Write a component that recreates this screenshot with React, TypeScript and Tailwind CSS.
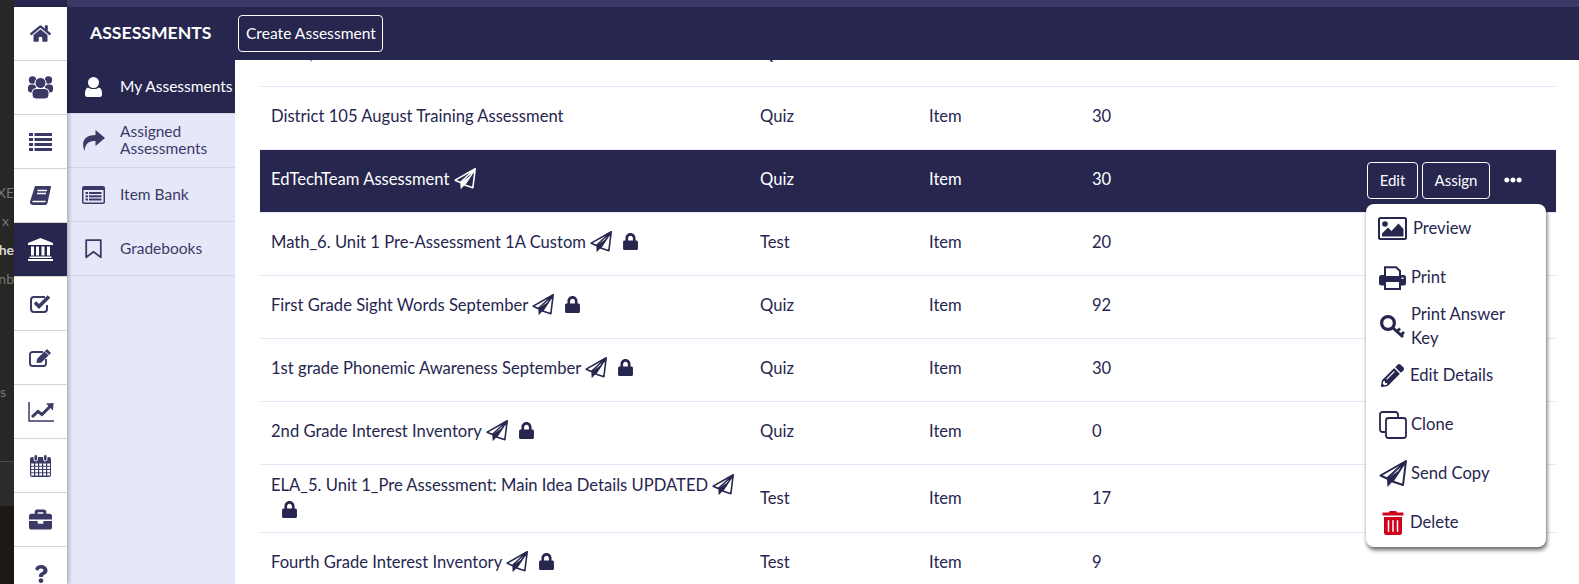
import { ReactNode } from 'react';
import { FaBriefcase, FaEllipsisH, FaHome, FaLock, FaPencilAlt, FaQuestion, FaTrashAlt } from 'react-icons/fa';

function UsersIcon() {
  return (
    <svg width="25" height="23" viewBox="0 0 25 23" fill="currentColor">
      <circle cx="4.5" cy="4" r="3.7" />
      <circle cx="20.5" cy="4" r="3.7" />
      <rect x="0" y="8.5" width="8" height="8" rx="3" />
      <rect x="17" y="8.5" width="8" height="8" rx="3" />
      <circle cx="12.5" cy="7" r="5.5" stroke="#fff" strokeWidth="1" />
      <rect x="4" y="12.5" width="17" height="10.5" rx="4" stroke="#fff" strokeWidth="1" />
    </svg>
  );
}

function ListIcon() {
  return (
    <svg width="23" height="18" viewBox="0 0 23 18" fill="currentColor">
      {[0, 5, 10, 15].map((y) => (
        <g key={y}>
          <rect x="0" y={y} width="4" height="3" />
          <rect x="5.5" y={y} width="17.5" height="3" />
        </g>
      ))}
    </svg>
  );
}

function BookIcon() {
  return (
    <svg width="21" height="19" viewBox="0 0 21 19" fill="currentColor">
      <path d="M5 0H20a1 1 0 0 1 1 1L17.5 17a2.5 2.5 0 0 1-2.5 2H3a3 3 0 0 1-3-3.2Z" />
      <path d="M7.5 4.5H17M7 7.5H16M2.5 15.5H15.5" stroke="#fff" strokeWidth="1.3" />
    </svg>
  );
}

function BankIcon() {
  return (
    <svg width="25" height="23" viewBox="0 0 25 23" fill="currentColor">
      <path d="M12.5 0L25 5V7H0V5Z" />
      {[3, 8, 13.5, 19].map((x) => (
        <rect key={x} x={x} y="8.5" width="3" height="9" />
      ))}
      <rect x="1.5" y="18.5" width="22" height="1.5" />
      <rect x="0" y="21" width="25" height="2" />
    </svg>
  );
}

function CheckIcon() {
  return (
    <svg width="21" height="18" viewBox="0 0 21 18" fill="none" stroke="currentColor">
      <path d="M17 10v4a3 3 0 0 1-3 3H4a3 3 0 0 1-3-3V5a3 3 0 0 1 3-3h11" strokeWidth="2" />
      <path d="M5 7.5l4 4L19 1.5" strokeWidth="3.6" />
    </svg>
  );
}

function EditIcon() {
  return (
    <svg width="23" height="18" viewBox="0 0 23 18" fill="currentColor">
      <path d="M17 10v4.5a2.5 2.5 0 0 1-2.5 2.5h-11A2.5 2.5 0 0 1 1 14.5v-9A2.5 2.5 0 0 1 3.5 3H14" fill="none" stroke="currentColor" strokeWidth="1.9" />
      <path d="M7.5 14l.7-4.2L18 0l4 4-9.8 9.8Z" />
      <path d="M16.3 2.7l3.5 3.5" stroke="#fff" strokeWidth="0.9" />
    </svg>
  );
}

function ChartIcon() {
  return (
    <svg width="26" height="20" viewBox="0 0 26 20" fill="none" stroke="currentColor">
      <path d="M1 0V19H26" strokeWidth="1.5" />
      <path d="M4 15l6-5.5 4 3L22 4.5" strokeWidth="3" />
      <path d="M18 1.5L25.5 1 25 8.5Z" fill="currentColor" stroke="none" />
    </svg>
  );
}

function CalendarIcon() {
  const cols = [2, 6, 10, 14, 18];
  const lines = [9.5, 12.75, 16, 19.25];
  return (
    <svg width="21" height="23" viewBox="0 0 21 23" fill="currentColor">
      <rect x="0" y="3" width="21" height="20" rx="2" />
      {cols.map((x) =>
        lines.map((y) => <rect key={`${x}-${y}`} x={x - 0.8} y={y} width="2.8" height="2.3" fill="#fff" />),
      )}
      <rect x="4" y="0.5" width="3.5" height="6.5" rx="1.7" stroke="#fff" strokeWidth="1" />
      <rect x="13.5" y="0.5" width="3.5" height="6.5" rx="1.7" stroke="#fff" strokeWidth="1" />
    </svg>
  );
}

function UserIcon() {
  return (
    <svg width="17" height="20" viewBox="0 0 17 20" fill="currentColor">
      <circle cx="8.5" cy="5.5" r="5.5" />
      <path d="M3 10.5c3 2 8 2 11 0 2 .5 3 3 3 6v1a2.5 2.5 0 0 1-2.5 2.5h-12A2.5 2.5 0 0 1 0 17.5v-1c0-3 1-5.5 3-6Z" />
    </svg>
  );
}

function ShareIcon() {
  return (
    <svg width="23" height="21" viewBox="0 0 23 21" fill="currentColor">
      <path d="M13.5 0L23 8l-9.5 8v-5C7 11 3.5 13 2.5 21-1 12 2 5 13.5 5Z" />
    </svg>
  );
}

function ListAltIcon() {
  return (
    <svg width="23" height="18" viewBox="0 0 23 18" fill="currentColor">
      <rect x="0" y="0" width="23" height="18" rx="2" />
      <rect x="1.5" y="4" width="20" height="12.5" fill="#e6e8fa" />
      {[6, 9.3, 12.5].map((y) => (
        <g key={y}>
          <rect x="3.5" y={y} width="2.5" height="2" />
          <rect x="7" y={y} width="12.5" height="2" />
        </g>
      ))}
    </svg>
  );
}

function BookmarkIcon() {
  return (
    <svg width="17" height="20" viewBox="0 0 17 20" fill="none" stroke="currentColor" strokeWidth="1.8">
      <path d="M1.2 1.2H15.8V18.3L8.5 12.8 1.2 18.3Z" strokeLinejoin="round" />
    </svg>
  );
}

function PictureIcon() {
  return (
    <svg width="29" height="23" viewBox="0 0 29 23" fill="currentColor">
      <rect x="1" y="1" width="27" height="21" rx="1.5" fill="none" stroke="currentColor" strokeWidth="2" />
      <circle cx="7" cy="7" r="2.8" />
      <path d="M4 19.5v-3l6-6 3.5 3.5 7-7.5 5 5.5v7.5Z" />
    </svg>
  );
}

function PrintIcon() {
  return (
    <svg width="27" height="24" viewBox="0 0 27 24" fill="currentColor">
      <rect x="0" y="9" width="27" height="10.5" rx="2.5" />
      <path d="M6 10V1.2H17L21 5V10" fill="#fff" stroke="currentColor" strokeWidth="2" />
      <rect x="6" y="15" width="15" height="8" fill="#fff" stroke="currentColor" strokeWidth="2" />
      <rect x="22.5" y="11.5" width="2" height="1.5" fill="#fff" />
    </svg>
  );
}

function KeyIcon() {
  return (
    <svg width="25" height="24" viewBox="0 0 25 24" fill="none" stroke="currentColor">
      <circle cx="8" cy="8" r="6.4" strokeWidth="3.2" />
      <path d="M12.5 12.5L23 22" strokeWidth="3" />
      <path d="M17 16.5l3-3M21 20l3-3" strokeWidth="2.8" />
    </svg>
  );
}

function CloneIcon() {
  return (
    <svg width="28" height="28" viewBox="0 0 28 28" fill="none" stroke="currentColor" strokeWidth="1.8">
      <path d="M6 21H3.5A2.5 2.5 0 0 1 1 18.5V3.5A2.5 2.5 0 0 1 3.5 1H16.5A2.5 2.5 0 0 1 19 3.5V6" />
      <rect x="7" y="7" width="20" height="20" rx="2.5" />
    </svg>
  );
}

function PlaneIcon({ size = 22 }: { size?: number }) {
  return (
    <svg width={size} height={size} viewBox="0 0 28 28" fill="none" stroke="currentColor" strokeWidth="2" strokeLinejoin="round" className="inline-block align-[-5px]">
      <path d="M27 1L1.5 15.5 8 18.5 27 1 24 25 13.5 21.5 27 1" />
      <path d="M8 18.5L8.5 27 13.5 21.5 21 10Z" fill="currentColor" stroke="none" />
    </svg>
  );
}

const railItems = [
  { icon: <FaHome size={21} /> },
  { icon: <UsersIcon /> },
  { icon: <ListIcon /> },
  { icon: <BookIcon /> },
  { icon: <BankIcon />, active: true },
  { icon: <CheckIcon /> },
  { icon: <EditIcon /> },
  { icon: <ChartIcon /> },
  { icon: <CalendarIcon /> },
  { icon: <FaBriefcase size={23} /> },
  { icon: <FaQuestion size={18} /> },
];

const rows = [
  { name: 'District 105 August Training Assessment', type: 'Quiz', count: '30', plain: true },
  { name: 'EdTechTeam Assessment', type: 'Quiz', count: '30', selected: true },
  { name: 'Math_6. Unit 1 Pre-Assessment 1A Custom', type: 'Test', count: '20' },
  { name: 'First Grade Sight Words September', type: 'Quiz', count: '92' },
  { name: '1st grade Phonemic Awareness September', type: 'Quiz', count: '30' },
  { name: '2nd Grade Interest Inventory', type: 'Quiz', count: '0' },
  { name: 'ELA_5. Unit 1_Pre Assessment: Main Idea Details UPDATED', type: 'Test', count: '17', tall: true },
  { name: 'Fourth Grade Interest Inventory', type: 'Test', count: '9' },
];

function NavItem({ icon, active, children }: { icon: ReactNode; active?: boolean; children: ReactNode }) {
  return (
    <div
      className={`flex h-[54px] items-center border-b border-[#d5d6e4] ${
        active ? 'bg-[#26264f] text-white' : 'text-[#3b3a66]'
      }`}
    >
      <div className="flex w-[53px] shrink-0 justify-center pr-px">{icon}</div>
      <div className="text-[15.5px] leading-[17px]">{children}</div>
    </div>
  );
}

function MenuItem({ icon, label, gap = 'ml-[4px]' }: { icon: ReactNode; label: ReactNode; gap?: string }) {
  return (
    <div className="flex h-[49px] items-center pl-3">
      <div className="flex w-[29px] shrink-0 justify-center">{icon}</div>
      <div className={`${gap} pb-[2px] leading-6`}>{label}</div>
    </div>
  );
}

function ActionMenu() {
  return (
    <div className="absolute right-[10px] top-[54px] z-10 w-[180px] rounded-lg bg-white text-[#26264f] shadow-[1px_3px_4px_rgba(0,0,0,0.6)]">
      <MenuItem icon={<PictureIcon />} label="Preview" gap="ml-[6px]" />
      <MenuItem icon={<PrintIcon />} label="Print" />
      <MenuItem icon={<KeyIcon />} label={<span className="block w-[110px]">Print Answer Key</span>} />
      <MenuItem icon={<FaPencilAlt size={23} />} label="Edit Details" gap="ml-[3px]" />
      <MenuItem icon={<CloneIcon />} label="Clone" />
      <MenuItem icon={<PlaneIcon size={28} />} label="Send Copy" />
      <MenuItem icon={<FaTrashAlt size={24} className="text-[#d0021b]" />} label="Delete" gap="ml-[3px]" />
    </div>
  );
}

function Row({ row }: { row: (typeof rows)[number] }) {
  return (
    <div
      className={`relative flex items-center border-b border-[#e6e8fa] pl-[11px] ${
        row.selected ? 'h-[63px] bg-[#26264f] pb-[3px] text-white' : row.tall ? 'h-[68px] pb-[1px]' : 'h-[63px] pb-[3px]'
      }`}
    >
      <div className="w-[489px] shrink-0 pr-6">
        {row.name}
        {!row.plain && (
          <>
            {' '}
            <PlaneIcon />
          </>
        )}
        {!row.plain && !row.selected && <FaLock size={17} className="ml-[10px] inline-block align-[-2px]" />}
      </div>
      <div className="w-[169px] shrink-0">{row.type}</div>
      <div className="w-[163px] shrink-0">Item</div>
      <div>{row.count}</div>
      {row.selected && (
        <>
          <div className="absolute right-[66px] top-[12px] flex gap-1 text-[15px]">
            <button className="h-[37px] w-[51px] rounded border border-white">Edit</button>
            <button className="h-[37px] w-[68px] rounded border border-white">Assign</button>
          </div>
          <FaEllipsisH size={18} className="absolute right-[34px] top-[21px]" />
          <ActionMenu />
        </>
      )}
    </div>
  );
}

export default function App() {
  return (
    <div className="flex h-[584px] w-[1579px] overflow-hidden bg-white font-['Lato',sans-serif] text-[16.6px] text-[#26264f]">
      {/* page behind the overlay, only a sliver of it shows */}
      <div className="relative flex w-[14px] shrink-0 flex-col overflow-hidden bg-[#272725] text-[14px] text-[#77777a]">
        <div className="absolute right-0 top-[182px] whitespace-nowrap">XE</div>
        <div className="absolute right-[5px] top-[210px]">x</div>
        <div className="absolute right-0 top-[239px] font-bold text-[#d8d8d8]">he</div>
        <div className="absolute right-0 top-[268px]">nb</div>
        <div className="absolute right-[8px] top-[381px]">s</div>
        <div className="mt-[461px] h-[45px] border-t border-[#4a4a4a] bg-[#2c2c2c]" />
        <div className="flex-1 bg-[#1d1715]" />
      </div>
      <div className="flex min-w-0 flex-1 flex-col">
        <div className="flex h-[7px] shrink-0 bg-[#3b3a66]">
          <div className="w-[53px] bg-[#26264f]" />
        </div>
        <div className="flex min-h-0 flex-1">
          <div className="z-10 w-[53px] shrink-0 bg-white text-[#3b3a66] shadow-[2px_0_4px_rgba(0,0,0,0.25)]">
            {railItems.map((item, i) => (
              <div
                key={i}
                className={`flex h-[54px] items-center justify-center border-b border-[#d5d5d5] ${
                  item.active ? 'bg-[#26264f] text-white' : ''
                }`}
              >
                {item.icon}
              </div>
            ))}
          </div>
          <div className="flex min-w-0 flex-1 flex-col">
            <div className="z-10 flex h-[53px] shrink-0 items-center bg-[#26264f] pl-[23px] text-white">
              <div className="text-[17.6px] font-bold">ASSESSMENTS</div>
              <button className="ml-[27px] h-[37px] w-[145px] rounded border border-white text-[15.6px]">
                Create Assessment
              </button>
            </div>
            <div className="flex min-h-0 flex-1">
              <div className="w-[168px] shrink-0 bg-[#e6e8fa]">
                <NavItem active icon={<UserIcon />}>My Assessments</NavItem>
                <NavItem icon={<ShareIcon />}>
                  <div className="-mt-[2px]">
                    Assigned
                    <br />
                    Assessments
                  </div>
                </NavItem>
                <NavItem icon={<ListAltIcon />}>Item Bank</NavItem>
                <NavItem icon={<BookmarkIcon />}>Gradebooks</NavItem>
              </div>
              <div className="min-w-0 flex-1 overflow-hidden pl-[25px] pr-[23px]">
                {/* row scrolled mostly out of view under the header */}
                <div className="-mt-[36px] flex h-[63px] items-center border-b border-[#e6e8fa] pb-[3px] pl-[11px]">
                  <div className="w-[489px] shrink-0">Math, Unit</div>
                  <div className="w-[169px] shrink-0">Quiz</div>
                </div>
                {rows.map((row) => (
                  <Row key={row.name} row={row} />
                ))}
              </div>
            </div>
          </div>
        </div>
      </div>
    </div>
  );
}
